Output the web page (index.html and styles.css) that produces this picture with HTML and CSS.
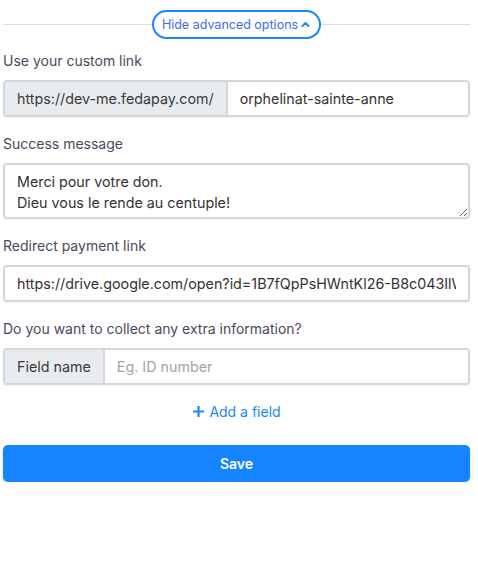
FILE: index.html
```html
<!DOCTYPE html>
<html lang="en">
<head>
    <meta charset="UTF-8">
    <meta name="viewport" content="width=device-width, initial-scale=1.0">
    <title>Advanced options</title>
    <link rel="stylesheet" href="styles.css">
</head>
<body>
    <div class="form">
        <div class="divider">
            <button class="toggle">
                Hide advanced options
                <svg width="9" height="7" viewBox="0 0 9 7"><polyline points="1.5,5 4.5,2 7.5,5" fill="none" stroke="#1a86ff" stroke-width="2" stroke-linecap="round" stroke-linejoin="round"/></svg>
            </button>
        </div>

        <label class="label">Use your custom link</label>
        <div class="group">
            <span class="addon">https://dev-me.fedapay.com/</span>
            <input class="field" type="text" value="orphelinat-sainte-anne">
        </div>

        <label class="label">Success message</label>
        <textarea class="field area">Merci pour votre don.
Dieu vous le rende au centuple!</textarea>

        <label class="label">Redirect payment link</label>
        <div class="group">
            <input class="field" type="text" value="https://drive.google.com/open?id=1B7fQpPsHWntKl26-B8c043IlWxyz">
        </div>

        <label class="label">Do you want to collect any extra information?</label>
        <div class="group">
            <span class="addon">Field name</span>
            <input class="field" type="text" placeholder="Eg. ID number">
        </div>

        <a class="add" href="#">
            <svg width="13" height="13" viewBox="0 0 13 13"><path d="M6.5 1v11M1 6.5h11" stroke="#1a86ff" stroke-width="2.2"/></svg>
            Add a field
        </a>

        <button class="save">Save</button>
    </div>
</body>
</html>
```

FILE: styles.css
```css
body {
    margin: 0;
    background-color: #fff;
    font-family: Inter, "Liberation Sans", sans-serif;
    color: #333;
}
.form {
    width: 467px;
    padding: 10px 0 0 3px;
    display: flex;
    flex-direction: column;
}
.divider {
    position: relative;
    display: flex;
    justify-content: center;
    height: 29px;
    margin-bottom: 12px;
}
.divider::before {
    content: "";
    position: absolute;
    left: 0;
    right: 0;
    top: 14px;
    border-top: 1px solid #dcdde2;
}
.toggle {
    position: relative;
    display: flex;
    align-items: center;
    gap: 3px;
    height: 29px;
    padding: 0 9px 0 8px;
    background-color: #fff;
    border: 2px solid #1a86ff;
    border-radius: 15px;
    color: #3f6bf0;
    font-family: inherit;
    font-size: 12.5px;
    cursor: pointer;
}
.label {
    display: block;
    height: 20px;
    line-height: 20px;
    margin-bottom: 9px;
    font-size: 14px;
    color: #4a4960;
}
.group {
    display: flex;
    height: 37px;
    margin-bottom: 17px;
    border: 2px solid #d3d6dc;
    border-radius: 4px;
    box-sizing: border-box;
    overflow: hidden;
    box-shadow: 0 1px 2px rgba(0, 0, 0, 0.06);
}
.addon {
    display: flex;
    align-items: center;
    padding: 0 12px;
    background-color: #e9ecef;
    border-right: 2px solid #d3d6dc;
    font-size: 14.3px;
    color: #3a3a3a;
    white-space: nowrap;
}
.field {
    flex: 1;
    min-width: 0;
    border: none;
    outline: none;
    padding: 0 12px;
    font-family: inherit;
    font-size: 14.3px;
    color: #333;
}
.field::placeholder {
    color: #a3a3ad;
}
.area {
    flex: none;
    height: 56px;
    margin-bottom: 17px;
    padding: 6px 12px;
    border: 2px solid #d3d6dc;
    border-radius: 4px;
    box-sizing: border-box;
    line-height: 21px;
    resize: vertical;
    box-shadow: 0 1px 2px rgba(0, 0, 0, 0.06);
}
.add {
    display: flex;
    align-items: center;
    justify-content: center;
    gap: 4px;
    margin-top: 1px;
    color: #1a86ff;
    font-size: 14px;
    text-decoration: none;
}
.save {
    height: 37px;
    margin-top: 25px;
    background-color: #1485ff;
    color: #fff;
    border: none;
    border-radius: 5px;
    font-family: inherit;
    font-size: 14px;
    font-weight: 600;
    cursor: pointer;
    box-shadow: 0 2px 4px rgba(0, 0, 0, 0.15);
}
```
